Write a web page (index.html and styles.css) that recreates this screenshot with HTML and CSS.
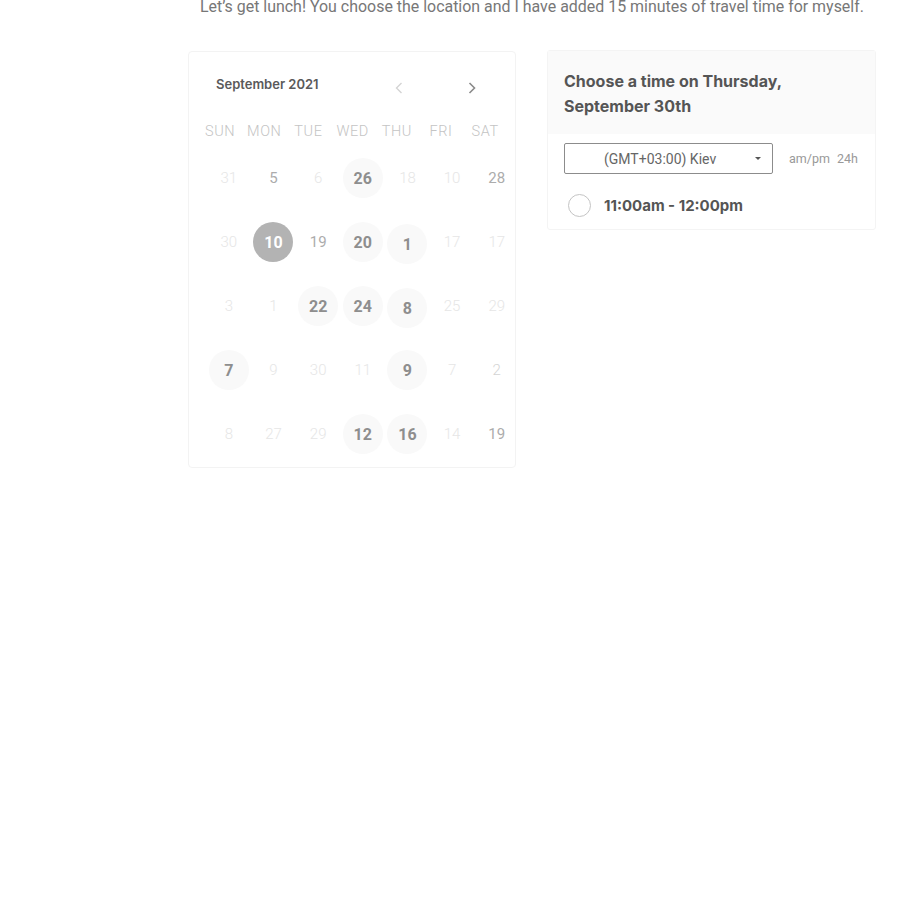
FILE: index.html
```html
<!DOCTYPE html>
<html>
<head>
<meta charset="utf-8">
<link rel="stylesheet" href="styles.css">
</head>
<body>
<p class="intro">Let’s get lunch! You choose the location and I have added 15 minutes of travel time for myself.</p>
<div class="main">
  <div class="cal">
    <div class="cal-head">
      <span class="month">September 2021</span>
      <span class="nav prev"><svg width="8" height="12" viewBox="0 0 8 12"><path d="M6.5 1 L1.5 6 L6.5 11" fill="none" stroke="#d4d4d4" stroke-width="1.4"/></svg></span>
      <span class="nav next"><svg width="8" height="12" viewBox="0 0 8 12"><path d="M1.5 1 L6.5 6 L1.5 11" fill="none" stroke="#8a8a8a" stroke-width="1.6"/></svg></span>
    </div>
    <div class="weekdays">
      <span>SUN</span><span>MON</span><span>TUE</span><span>WED</span><span>THU</span><span>FRI</span><span>SAT</span>
    </div>
    <div class="grid">
      <span class="d off">31</span><span class="d mid">5</span><span class="d off">6</span><span class="d av">26</span><span class="d off">18</span><span class="d off">10</span><span class="d mid">28</span>
      <span class="d off">30</span><span class="d sel">10</span><span class="d mid">19</span><span class="d av">20</span><span class="d av low">1</span><span class="d off">17</span><span class="d off">17</span>
      <span class="d off">3</span><span class="d off">1</span><span class="d av">22</span><span class="d av">24</span><span class="d av low">8</span><span class="d off">25</span><span class="d off">29</span>
      <span class="d av">7</span><span class="d off">9</span><span class="d off">30</span><span class="d off">11</span><span class="d av">9</span><span class="d off">7</span><span class="d off2">2</span>
      <span class="d off">8</span><span class="d off">27</span><span class="d off">29</span><span class="d av">12</span><span class="d av">16</span><span class="d off">14</span><span class="d mid">19</span>
    </div>
  </div>
  <div class="times">
    <div class="times-head">Choose a time on Thursday,<br>September 30th</div>
    <div class="tz-row">
      <div class="tz-select"><span class="tz-text">(GMT+03:00) Kiev</span><span class="caret"></span></div>
      <div class="fmt"><span>am/pm</span><span>24h</span></div>
    </div>
    <div class="slot"><span class="radio"></span><span class="slot-text">11:00am - 12:00pm</span></div>
  </div>
</div>
</body>
</html>
```
FILE: styles.css
```css
html, body { margin: 0; padding: 0; background: #fff; }
body { font-family: Roboto, "Liberation Sans", sans-serif; }

.intro {
  margin: -3px 0 0 200px;
  font-size: 15.95px;
  font-weight: 400;
  line-height: 20px;
  color: #777;
  white-space: nowrap;
}

.main {
  display: flex;
  align-items: flex-start;
  gap: 31px;
  margin: 34px 0 0 188px;
}

.cal {
  width: 326px;
  height: 415px;
  border: 1px solid #f3f3f3;
  border-radius: 4px;
}

.cal-head {
  display: flex;
  align-items: center;
  height: 20px;
  margin-top: 22px;
  padding-left: 27px;
}
.month {
  font-family: Inter, "Noto Sans", sans-serif;
  font-weight: 600;
  font-size: 13px;
  color: #5a5a5a;
  width: 179px;
}
.nav { display: flex; margin-top: 8px; }
.prev { width: 73px; }

.weekdays {
  display: grid;
  grid-template-columns: repeat(7, 44.2px);
  margin-top: 28px;
  padding-left: 9px;
  height: 20px;
  line-height: 20px;
  font-size: 14.5px;
  font-weight: 300;
  color: #c4c4c4;
  letter-spacing: 0.6px;
}
.weekdays span { text-align: center; }

.grid {
  display: grid;
  grid-template-columns: repeat(7, 44.67px);
  grid-auto-rows: 64px;
  margin-top: 4px;
  padding-left: 17.5px;
}
.d {
  display: flex;
  align-items: center;
  justify-content: center;
  justify-self: center;
  align-self: center;
  width: 40px;
  height: 40px;
  border-radius: 50%;
  font-size: 15px;
}
.off { color: #e6e6e6; font-weight: 300; }
.off2 { color: #d4d4d4; font-weight: 300; }
.mid { color: #acacac; font-weight: 400; }
.av { background: #f9f9f9; color: #8e8e8e; font-weight: 700; font-size: 16px; }
.low { margin-top: 4px; }
.sel { background: #b3b3b3; color: #fff; font-weight: 700; font-size: 16px; }

.times {
  width: 327px;
  border: 1px solid #f4f4f4;
  border-radius: 3px;
  margin-top: -1px;
}
.times-head {
  background: #fafafa;
  padding: 18px 16px 15px;
  font-family: Inter, "Noto Sans", sans-serif;
  font-weight: 700;
  font-size: 16px;
  line-height: 25px;
  color: #555;
}
.tz-row {
  display: flex;
  align-items: center;
  padding: 9px 16px 0;
}
.tz-select {
  width: 207px;
  height: 29px;
  border: 1px solid #8c8c8c;
  border-radius: 2px;
  display: flex;
  align-items: center;
  position: relative;
}
.tz-text {
  font-size: 14px;
  color: #666;
  margin-left: 39px;
}
.caret {
  position: absolute;
  right: 11px;
  top: 13px;
  width: 0;
  height: 0;
  border-left: 3px solid transparent;
  border-right: 3px solid transparent;
  border-top: 3px solid #555;
}
.fmt {
  margin-left: 16px;
  font-size: 12.5px;
  color: #999;
  display: flex;
  gap: 7px;
}
.slot {
  display: flex;
  align-items: center;
  padding: 20px 0 12px 20px;
}
.radio {
  width: 21px;
  height: 21px;
  border: 1.5px solid #c4c4c4;
  border-radius: 50%;
  flex: none;
}
.slot-text {
  margin-left: 13px;
  font-family: Inter, "Noto Sans", sans-serif;
  font-weight: 700;
  font-size: 15px;
  color: #555;
}
```
